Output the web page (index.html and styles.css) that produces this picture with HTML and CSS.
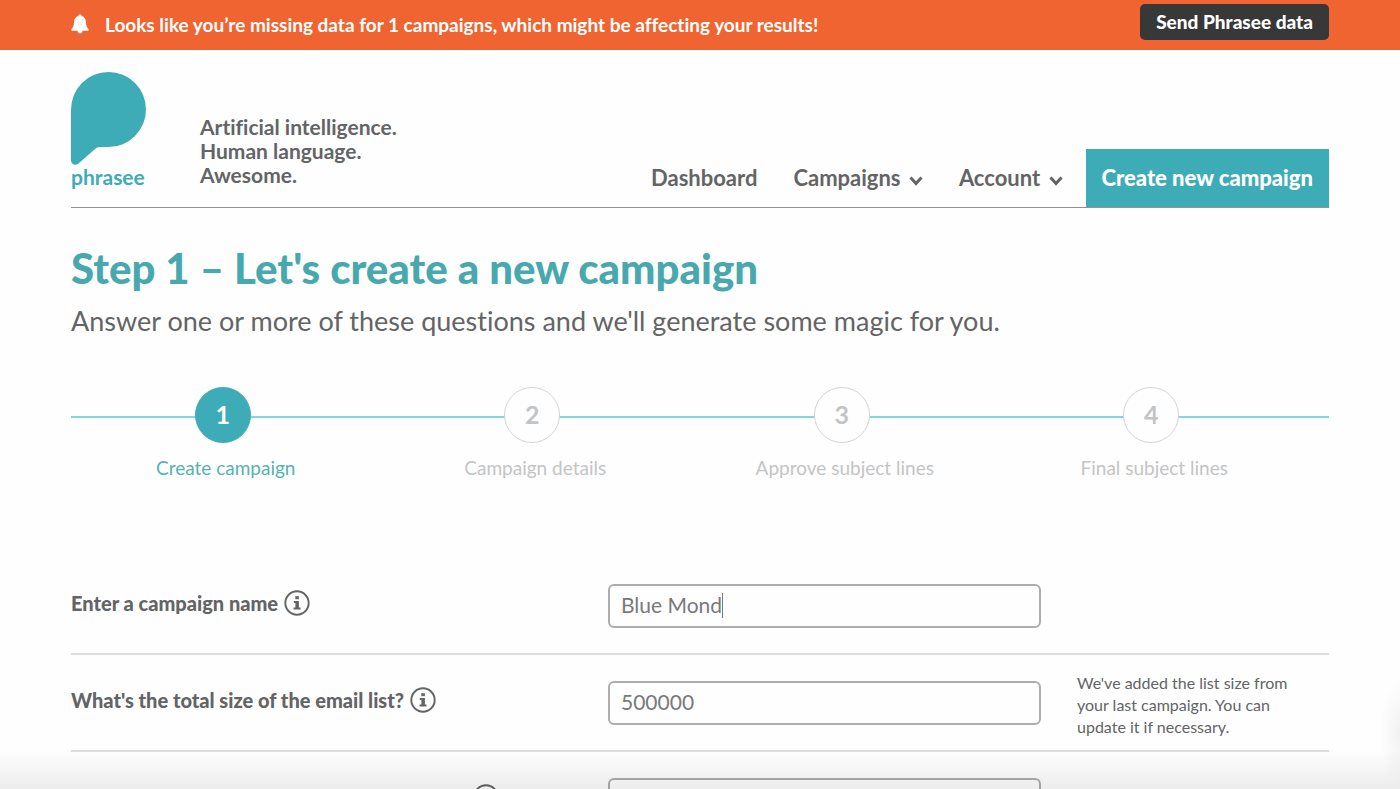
FILE: index.html
```html
<!DOCTYPE html>
<html lang="en">
<head>
	<meta charset="UTF-8">
	<meta name="viewport" content="width=device-width, initial-scale=1">
	<title>Phrasee - Create a new campaign</title>
	<link rel="stylesheet" href="styles.css">
</head>
<body>
	<!-- shared icons -->
	<svg class="sprite" aria-hidden="true">
		<symbol id="icon_info" viewBox="0 0 26 26">
			<circle cx="13" cy="13" r="11.7" fill="none" stroke="currentColor" stroke-width="1.9"/>
			<rect x="11.3" y="6.2" width="3.6" height="3" fill="currentColor"/>
			<path d="M9.8 11h5.1v6.6h1.6v2H9.6v-2h1.8v-4.6H9.8z" fill="currentColor"/>
		</symbol>
		<symbol id="icon_chevron" viewBox="0 0 14 10">
			<path d="M1.5 1.5L7 7.5L12.5 1.5" fill="none" stroke="currentColor" stroke-width="3"/>
		</symbol>
	</svg>

	<div class="alert">
		<svg class="alert_icon" viewBox="0 0 18 20" aria-hidden="true">
			<path d="M9 .5c1 0 1.6.7 1.7 1.6 2.7.8 4 3 4.2 5.6.2 4 .8 5.5 2.6 7.3v1.7H.5V15c1.8-1.8 2.4-3.3 2.6-7.3.2-2.6 1.5-4.8 4.2-5.6C7.4 1.2 8 .5 9 .5zM6.5 16.5h5c-.2 2-1.2 3-2.5 3s-2.3-1-2.5-3z" fill="#fff"/>
		</svg>
		<p class="alert_text">Looks like you’re missing data for 1 campaigns, which might be affecting your results!</p>
		<button type="button" class="alert_button">Send Phrasee data</button>
	</div>

	<header class="header">
		<a href="#" class="logo">
			<svg class="logo_mark" viewBox="0 0 75 93" aria-hidden="true">
				<path d="M0 37.5A37.5 37.5 0 1 1 37.5 75H29Q26 75 24 77L7.5 91.5C4.5 94 0 92.5 0 88.5z" fill="#3eacb6"/>
			</svg>
			<span class="logo_name">phrasee</span>
		</a>
		<p class="tagline">Artificial intelligence.<br>Human language.<br>Awesome.</p>
		<nav class="nav">
			<a href="#" class="nav_link">Dashboard</a>
			<a href="#" class="nav_link">Campaigns <svg class="nav_arrow" aria-hidden="true"><use href="#icon_chevron"/></svg></a>
			<a href="#" class="nav_link">Account <svg class="nav_arrow" aria-hidden="true"><use href="#icon_chevron"/></svg></a>
			<a href="#" class="nav_create">Create new campaign</a>
		</nav>
	</header>

	<main class="container">
		<h1 class="title">Step 1 – Let's create a new campaign</h1>
		<p class="intro">Answer one or more of these questions and we'll generate some magic for you.</p>

		<ol class="steps">
			<li class="step current"><span class="step_number">1</span><span class="step_name">Create campaign</span></li>
			<li class="step"><span class="step_number">2</span><span class="step_name">Campaign details</span></li>
			<li class="step"><span class="step_number">3</span><span class="step_name">Approve subject lines</span></li>
			<li class="step"><span class="step_number">4</span><span class="step_name">Final subject lines</span></li>
		</ol>

		<form class="form">
			<div class="row">
				<div class="row_label">
					<label for="campaign_name">Enter a campaign name</label>
					<button type="button" class="info" aria-label="About the campaign name"><svg class="info_icon"><use href="#icon_info"/></svg></button>
				</div>
				<div class="field_wrap">
					<input class="field" type="text" id="campaign_name" value="Blue Mond">
					<span class="caret"></span>
				</div>
			</div>
			<div class="row">
				<div class="row_label">
					<label for="list_size">What's the total size of the email list?</label>
					<button type="button" class="info" aria-label="About the list size"><svg class="info_icon"><use href="#icon_info"/></svg></button>
				</div>
				<input class="field" type="text" id="list_size" value="500000">
				<p class="hint">We've added the list size from your last campaign. You can update it if necessary.</p>
			</div>
			<div class="row">
				<div class="row_label row_label_next">
					<button type="button" class="info" aria-label="More information"><svg class="info_icon"><use href="#icon_info"/></svg></button>
				</div>
				<input class="field" type="text" aria-label="Next question">
			</div>
		</form>
	</main>
	<div class="fade"></div>
	<div class="fade_side"></div>
</body>
</html>
```
FILE: styles.css
```css
* { box-sizing: border-box; }

body {
	margin: 0;
	background: #fefefe;
	color: #636466;
	font-family: Lato, "Open Sans", sans-serif;
	font-variant-ligatures: none;
}

p, h1, ol { margin: 0; padding: 0; }
a { color: inherit; text-decoration: none; }
button { font-family: inherit; cursor: pointer; }

.sprite { display: none; }

.alert {
	display: flex;
	align-items: center;
	height: 50px;
	padding: 0 71px 2px;
	background: #f06431;
	color: #fff;
}

.alert_icon { width: 18px; height: 20px; margin-right: 16px; }
.alert_text { font-size: 19px; font-weight: bold; }

.alert_button {
	height: 36px;
	margin: 0 0 4px auto;
	padding: 0 16px 2px;
	border: 0;
	border-radius: 5px;
	background: #383838;
	color: #fff;
	font-size: 19px;
	font-weight: 900;
}

.header {
	display: flex;
	align-items: flex-end;
	height: 158px;
	margin: 0 71px;
	border-bottom: 1px solid #929292;
}

.logo {
	display: flex;
	flex-direction: column;
	width: 75px;
	margin-right: 54px;
	padding-bottom: 18px;
	color: #3eacb6;
}

.logo_mark { width: 75px; height: 93px; }
.logo_name { font-size: 21px; font-weight: bold; line-height: 24px; }

.tagline {
	padding-bottom: 20px;
	font-size: 21px;
	font-weight: bold;
	line-height: 24px;
}

.nav {
	display: flex;
	margin-left: auto;
	font-size: 22px;
	font-weight: bold;
	line-height: 58px;
}

.nav_link { margin-right: 36px; }
.nav_link + .nav_link + .nav_link { margin-right: 23px; }
.nav_arrow { width: 14px; height: 10px; margin-left: 3px; }

.nav_create {
	padding: 0 16px;
	background: #3eacb6;
	color: #fff;
	font-weight: 900;
}

.container { margin: 0 71px; }

.title {
	padding-top: 33px;
	color: #47a9ae;
	font-size: 42px;
	font-weight: 900;
	line-height: 54px;
}

.intro { font-size: 27px; line-height: 52px; }

.steps {
	display: flex;
	margin-top: 40px;
	padding-right: 20px;
	background: linear-gradient(#83d6dd, #83d6dd) 0 29px / 100% 2px no-repeat;
	list-style: none;
}

.step {
	display: flex;
	flex: 1;
	flex-direction: column;
	align-items: center;
	color: #c3c4c5;
}

.step_number {
	width: 56px;
	height: 56px;
	margin-right: 6px;
	border: 1px solid #d4d4d4;
	border-radius: 50%;
	background: #fefefe;
	font-size: 25px;
	font-weight: bold;
	line-height: 52px;
	text-align: center;
}

.step_name { margin-top: 12px; font-size: 19px; line-height: 26px; }

.current { color: #56b3b2; }
.current .step_number { border-color: #3eacb6; background: #3eacb6; color: #fff; }

.form { margin-top: 77px; }

.row {
	display: grid;
	grid-template-columns: 537fr 433fr 36fr 252fr;
	align-items: center;
	height: 97px;
	border-bottom: 2px solid #dedede;
}

.row_label {
	display: flex;
	align-items: center;
	padding-bottom: 5px;
	font-size: 20px;
	font-weight: 900;
}

.row_label_next { padding-left: 396px; }

.info { display: flex; margin-left: 6px; padding: 0; border: 0; background: none; color: inherit; }
.info_icon { width: 26px; height: 26px; }

.field {
	display: block;
	width: 100%;
	height: 44px;
	padding: 0 11px 2px;
	border: 2px solid #adadad;
	border-radius: 6px;
	background: transparent;
	color: #78797b;
	font-family: inherit;
	font-size: 21px;
	outline: 0;
}

.field_wrap { position: relative; }

.caret {
	position: absolute;
	top: 9px;
	left: 114px;
	width: 1px;
	height: 25px;
	background: #78797b;
}

.hint { grid-column: 4; width: 220px; padding-top: 4px; font-size: 16px; line-height: 22px; }

/* shades along the bottom and right edges of the window */
.fade,
.fade_side {
	position: fixed;
	right: 0;
	bottom: 0;
	pointer-events: none;
}

.fade {
	left: 0;
	height: 38px;
	background: linear-gradient(rgba(0, 0, 0, 0), rgba(0, 0, 0, .07));
}

.fade_side {
	width: 20px;
	height: 110px;
	background: radial-gradient(ellipse at right center, rgba(0, 0, 0, .05), rgba(0, 0, 0, 0) 70%);
}
```
